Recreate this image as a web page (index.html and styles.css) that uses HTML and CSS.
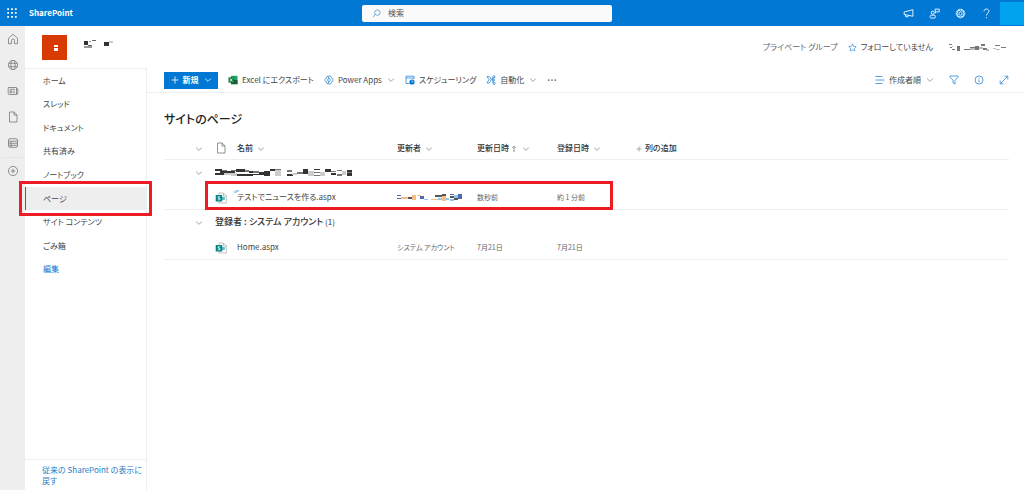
FILE: index.html
```html
<!DOCTYPE html>
<html lang="ja">
<head>
<meta charset="utf-8">
<title>サイトのページ - SharePoint</title>
<link rel="stylesheet" href="styles.css">
</head>
<body>
<svg class="defs" aria-hidden="true">
  <symbol id="chev" viewBox="0 0 8 8"><path d="M1.2 2.6 4 5.4 6.8 2.6"/></symbol>
  <symbol id="doc" viewBox="0 0 12 12"><path d="M2.5 1h4.6L10 3.9V11H2.500zM7 1v3h3"/></symbol>
  <symbol id="page" viewBox="0 0 12 12"><path d="M4 1h4.500L11.300 3.800V11H4z" fill="#fff" stroke="#aaa" stroke-width=".7"/><path d="M8.500 1v3h2.800" fill="none" stroke="#aaa" stroke-width=".7"/><path d="M7 5h2.800v3H7z" fill="#53c5c9" stroke="none"/><path d="M.7 3h6.500v6.500H.7z" fill="#038387" stroke="none"/><path d="M5.200 4.700H3.200v1.500h1.700v1.600H2.800" fill="none" stroke="#fff" stroke-width=".8"/></symbol>
</svg>
<header class="suite">
  <button class="waffle" aria-label="アプリ起動ツール"><svg viewBox="0 0 10 10"><path fill="#fff" stroke="none" d="M1 1h1.500v1.500H1zM4.200 1h1.500v1.500H4.200zM7.400 1h1.500v1.500H7.400zM1 4.200h1.500v1.500H1zM4.200 4.200h1.500v1.500H4.200zM7.400 4.200h1.500v1.500H7.400zM1 7.400h1.500v1.500H1zM4.200 7.400h1.500v1.500H4.200zM7.400 7.400h1.500v1.500H7.400z"/></svg></button>
  <a class="brand" href="#">SharePoint</a>
  <label class="search"><svg viewBox="0 0 10 10"><circle cx="6" cy="4" r="3"/><path d="M3.800 6.200 1 9"/></svg><input type="search" placeholder="検索" aria-label="検索"></label>
  <div class="suite-actions">
    <button aria-label="お知らせ"><svg viewBox="0 0 10 10"><path d="M9 1.500v6L1 5.800V3.700zM2.300 6.200v1.500l2.200.5.300-1.500"/></svg></button>
    <button aria-label="共有"><svg viewBox="0 0 10 10"><circle cx="3.400" cy="4.300" r="1.400"/><rect x="1" y="6.500" width="4.800" height="2.700" rx="1.200"/><path d="M5.600 1h3.700v2.500H7L5.800 4.600z"/></svg></button>
    <button aria-label="設定"><svg viewBox="0 0 10 10"><circle cx="5" cy="5" r="3.900" stroke-dasharray="2 .6"/><circle cx="5" cy="5" r="3.200"/><circle cx="5" cy="5" r="1.500"/></svg></button>
    <button aria-label="ヘルプ"><svg viewBox="0 0 10 10"><path d="M2.800 3C2.800 1.500 3.700 1 5 1s2.200.8 2.200 2S5 5 5 6.800M5 8.200v1"/></svg></button>
    <button class="me" aria-label="アカウント"></button>
  </div>
</header>
<div class="shell">
  <nav class="rail" aria-label="グローバル">
    <a href="#" aria-label="ホーム"><svg viewBox="0 0 12 12"><path d="M1.500 5.200 6 1.300l4.500 3.900v5.500H7.500V7.500a1.500 1.500 0 0 0-3 0v3.200h-3z"/></svg></a>
    <a href="#" aria-label="サイト"><svg viewBox="0 0 12 12"><circle cx="6" cy="6" r="4.600"/><ellipse cx="6" cy="6" rx="2.100" ry="4.600"/><path d="M1.800 4.300h8.400M1.800 7.700h8.400"/></svg></a>
    <a href="#" aria-label="ニュース"><svg viewBox="0 0 12 12"><path d="M1.200 2.500h8.300v7H2.400q-1.200 0-1.200-1.200zM9.500 3.800h1.300v4.500q0 1.200-1.300 1.200M2.800 4.300h5M3 5.900h1.900v1.900H3zM6.200 6h1.700M6.200 7.700h1.700"/></svg></a>
    <a href="#" aria-label="ファイル"><svg><use href="#doc"/></svg></a>
    <a href="#" aria-label="リスト"><svg viewBox="0 0 12 12"><rect x="1.500" y="1.700" width="9" height="8.600" rx="1.400"/><path d="M1.500 4.200h9M1.500 6.300h9M1.500 8.300h9M4 4.200v6"/></svg></a>
    <a class="create" href="#" aria-label="作成"><svg viewBox="0 0 12 12"><circle cx="6" cy="6" r="4.600"/><path d="M6 3.700v4.600M3.700 6h4.600"/></svg></a>
  </nav>
  <div class="site">
    <div class="site-head">
      <div class="logo"><svg viewBox="0 0 25 25"><path fill="#fff" d="M12 10h4v2h-4zM12 13h4v3h-4z"/></svg></div>
      <svg class="mosaic site-name" viewBox="0 0 32 10"><path fill="#333" d="M1 1h4v4H1zM21 2h5v4h-5z"/><path fill="#666" d="M9 0h4v1H9zM5 5h4v1H5z"/><path fill="#999" d="M1 6h8v2H1zM6 1h2v1H6z"/><path fill="#ccc" d="M26 1h4v2h-4z"/></svg>
      <div class="site-meta">
        <span>プライベート グループ</span>
        <button class="follow"><svg viewBox="0 0 10 10"><path d="m5 1 1.200 2.700 2.900.3L7 6l.6 2.900L5 7.400 2.400 8.900 3 6 .9 4l2.900-.3z"/></svg>フォローしていません</button>
        <svg class="mosaic members" viewBox="0 0 58 9"><path fill="#777" d="M1 1h3v1H1zM2 4h2v1H2zM4 6h3v1H4zM9 3h3v5H9zM16 6h6v1h-6zM22 4h5v1h-5zM27 3h4v4h-4zM33 1h4v2h-4zM35 5h4v2h-4zM47 2h5v1h-5zM53 4h5v1h-5z"/><path fill="#bbb" d="M4 3h1v1H4zM22 5h5v2h-5zM31 4h4v2h-4zM38 6h3v2h-3zM45 5h3v1h-3zM48 6h4v1h-4z"/></svg>
      </div>
    </div>
    <div class="body">
      <aside class="side">
        <nav aria-label="サイト">
          <ul>
            <li><a href="#">ホーム</a></li>
            <li><a href="#">スレッド</a></li>
            <li><a href="#">ドキュメント</a></li>
            <li><a href="#">共有済み</a></li>
            <li><a href="#">ノートブック</a></li>
            <li class="current"><a href="#" aria-current="page">ページ</a><span class="marker"></span></li>
            <li><a href="#">サイト コンテンツ</a></li>
            <li><a href="#">ごみ箱</a></li>
            <li class="edit"><a href="#">編集</a></li>
          </ul>
        </nav>
        <a class="classic" href="#">従来の SharePoint の表示に戻す</a>
      </aside>
      <main>
        <div class="commands">
          <button class="new"><svg viewBox="0 0 8 8"><path d="M4 .5v7M.5 4h7"/></svg>新規<svg class="chev"><use href="#chev"/></svg></button>
          <button><svg viewBox="0 0 10 10" class="ic"><path fill="#21a366" stroke="none" d="M3 .8h6.500v8.400H3z"/><path fill="#185c37" stroke="none" d="M3 5h6.500v4.200H3z"/><path fill="#107c41" stroke="none" d="M.5 2.300h5.400v5.400H.5z"/><path stroke="#fff" d="m2 3.500 2.400 3M4.400 3.500 2 6.500"/></svg>Excel にエクスポート</button>
          <button><svg viewBox="0 0 10 10" class="ic"><path d="M3.500 1.200h3L9.300 5 6.500 8.800h-3L.7 5zM3.500 1.200 6.500 5l-3 3.800M5 3 3.500 5 5 7"/></svg>Power Apps<svg class="chev"><use href="#chev"/></svg></button>
          <button><svg viewBox="0 0 10 10" class="ic"><path d="M4.500 8.500H1V1.200h8v3M1 3h8"/><circle cx="7" cy="7" r="2.600" fill="#0078d4" stroke="none"/><path stroke="#fff" stroke-width=".6" d="M7 5.600V7h1.200"/></svg>スケジューリング</button>
          <button><svg viewBox="0 0 10 10" class="ic"><path d="M1 1.500h1.800Q5 2 5 4.500T2.800 8H1l2-3.500zM5 4.500 7 2.600M7 2.600V8"/><circle cx="8" cy="1.900" r="1.100"/><circle cx="7.500" cy="5" r="1"/><circle cx="8" cy="8.300" r="1.100"/></svg>自動化<svg class="chev"><use href="#chev"/></svg></button>
          <button class="more" aria-label="その他"><svg viewBox="0 0 10 10"><path fill="#444" stroke="none" d="M1 4.500h1.400v1.200H1zM4.300 4.500h1.400v1.200H4.300zM7.600 4.500H9v1.200H7.600z"/></svg></button>
          <div class="view">
            <button><svg viewBox="0 0 10 10" class="ic"><path d="M.5 1.500h7M.5 5h9M.5 8.500h7"/></svg>作成者順<svg class="chev"><use href="#chev"/></svg></button>
            <button aria-label="フィルター"><svg viewBox="0 0 10 10" class="ic"><path d="M1 1h8v1.200L6 5.200V9L4 7.800V5.200l-3-3z"/></svg></button>
            <button aria-label="詳細"><svg viewBox="0 0 10 10" class="ic"><circle cx="5" cy="5" r="4"/><path d="M5 4.500v2.700M5 2.700v.8"/></svg></button>
            <button aria-label="展開"><svg viewBox="0 0 10 10" class="ic"><path d="m1.300 8.700 7.400-7.400M5.500 1.200h3.300v3.300M1.200 5.500v3.300h3.300"/></svg></button>
          </div>
        </div>
        <section class="library">
          <h1>サイトのページ</h1>
          <table>
            <colgroup><col class="c-toggle"><col class="c-icon"><col class="c-name"><col class="c-meta"><col class="c-meta"><col class="c-meta"><col></colgroup>
            <thead>
              <tr>
                <th class="toggle"><svg class="chev"><use href="#chev"/></svg></th>
                <th><svg class="file"><use href="#doc"/></svg></th>
                <th>名前<svg class="chev"><use href="#chev"/></svg></th>
                <th>更新者<svg class="chev"><use href="#chev"/></svg></th>
                <th>更新日時<svg class="sort" viewBox="0 0 8 8"><path d="M4 7V1.200M2.300 2.900 4 1.200l1.700 1.700"/></svg><svg class="chev"><use href="#chev"/></svg></th>
                <th>登録日時<svg class="chev"><use href="#chev"/></svg></th>
                <th><svg class="add" viewBox="0 0 8 8"><path d="M4 1.500v5M1.500 4h5"/></svg>列の追加</th>
              </tr>
            </thead>
            <tbody>
              <tr class="group">
                <td class="toggle"><svg class="chev"><use href="#chev"/></svg></td>
                <td colspan="6"><svg class="mosaic group-name" viewBox="0 0 138 9"><path fill="#333" d="M0 1h7v2H0zM5 3h7v2H5zM0 5h9v2H0zM12 3h8v2h-8zM21 1h9v3h-9zM22 6h16v2H22zM34 3h4v2h-4zM38 6h8v1h-8zM49 3h6v5h-6zM55 1h5v2h-5zM44 4h5v3h-5zM72 6h6v2h-6zM88 1h5v5h-5zM99 1h6v1h-6zM110 1h6v3h-6zM116 5h5v2h-5zM132 2h5v2h-5zM132 5h5v3h-5z"/><path fill="#777" d="M7 2h5v1H7zM16 2h5v1h-5zM30 2h4v2h-4zM38 3h6v2h-6zM60 1h6v1h-6zM72 2h5v2h-5zM82 4h6v2h-6zM99 4h6v1h-6zM99 7h6v1h-6zM116 3h5v1h-5zM122 2h5v1h-5zM122 6h5v2h-5zM132 4h5v1h-5z"/><path fill="#ccc" d="M9 5h7v2H9zM16 5h6v3h-6zM60 2h6v6h-6zM77 5h5v2h-5zM93 3h6v5h-6zM105 4h5v4h-5zM127 3h4v4h-4z"/></svg></td>
              </tr>
              <tr class="item">
                <td></td>
                <td><svg class="file"><use href="#page"/></svg></td>
                <td><a href="#">テストでニュースを作る.aspx</a><svg class="glimmer" viewBox="0 0 6 6"><path d="M1 2.500 2.500 4M3 1v2.500M5.500 1 4.500 3"/></svg></td>
                <td><svg class="mosaic editor" viewBox="0 0 66 9"><path fill="#5068b0" d="M0 2h4v1H0zM0 5h4v1H0zM23 3h4v3h-4zM53 1h4v1h-4zM61 1h4v5h-4z"/><path fill="#f6bd87" d="M4 4h7v2H4zM15 2h4v5h-4zM34 6h7v1h-7zM45 3h4v5h-4zM20 2h4v1h-4z"/><path fill="#555" d="M11 4h4v2h-4zM38 2h7v2h-7zM45 1h4v2h-4zM53 3h4v2h-4zM57 5h4v2h-4z"/><path fill="#8cc5ee" d="M27 6h4v1h-4zM41 5h4v2h-4zM49 5h3v2h-3zM57 2h4v3h-4zM53 6h4v2h-4z"/></svg></td>
                <td>数秒前</td>
                <td>約 1 分前</td>
                <td><span class="marker"></span></td>
              </tr>
              <tr class="group">
                <td class="toggle"><svg class="chev"><use href="#chev"/></svg></td>
                <td colspan="6"><b>登録者 : システム アカウント</b> (1)</td>
              </tr>
              <tr class="item">
                <td></td>
                <td><svg class="file"><use href="#page"/></svg></td>
                <td><a href="#">Home.aspx</a></td>
                <td>システム アカウント</td>
                <td>7月21日</td>
                <td>7月21日</td>
                <td></td>
              </tr>
            </tbody>
          </table>
        </section>
      </main>
    </div>
  </div>
</div>
</body>
</html>
```

FILE: styles.css
```css
* { box-sizing: border-box; }
body {
  margin: 0;
  min-height: 100vh;
  display: flex;
  flex-direction: column;
  background: #fff;
  color: #444;
  font: 8px/12px "Noto Sans CJK JP", sans-serif;
  font-feature-settings: "palt";
}
a { color: inherit; text-decoration: none; }
button {
  display: inline-flex;
  align-items: center;
  padding: 0;
  border: 0;
  background: none;
  color: inherit;
  font: inherit;
  font-feature-settings: inherit;
  white-space: nowrap;
}
svg { flex: none; fill: none; stroke: currentColor; stroke-width: 0.8; }
.defs { position: absolute; width: 0; height: 0; }
.mosaic { stroke: none; display: block; }
.chev { width: 8px; height: 8px; color: #888; }

.suite {
  height: 26px;
  display: grid;
  grid-template-columns: 19fr 250px 22fr;
  grid-template-areas: "brand search actions";
  align-items: center;
  background: #0078d4;
  color: #fff;
  padding-left: 6px;
}
.waffle, .brand { grid-area: brand; }
.waffle { justify-self: start; }
.waffle svg { width: 12px; height: 12px; }
.brand { justify-self: start; margin-left: 23px; font-weight: 700; }
.search {
  grid-area: search;
  display: flex;
  align-items: center;
  gap: 7px;
  height: 17px;
  padding: 0 10px;
  border-radius: 2px;
  background: #fafafa;
  color: #3a8fd8;
}
.search svg { width: 9px; height: 9px; }
.search input {
  flex: 1;
  min-width: 0;
  padding: 0;
  border: 0;
  outline: 0;
  background: none;
  font: inherit;
}
.search input::placeholder { color: #555; opacity: 1; }
.suite-actions {
  grid-area: actions;
  justify-self: end;
  display: flex;
  align-items: center;
  gap: 15px;
}
.suite-actions svg { width: 11px; height: 11px; }
.suite-actions .me { width: 24px; height: 23px; margin-left: -7px; background: #00a2ed; }

.shell { flex: 1; display: flex; }
.rail {
  width: 25px;
  flex: none;
  display: flex;
  flex-direction: column;
  align-items: center;
  background: #eee;
  color: #777;
}
.rail a { width: 21px; height: 26px; display: grid; place-items: center; }
.rail svg { width: 12px; height: 12px; }
.rail .create { margin-top: 1px; border-top: 1px solid #e4e4e4; }

.site { flex: 1; min-width: 0; display: flex; flex-direction: column; }
.site-head { height: 42px; display: flex; align-items: center; padding: 0 18px 0 17px; }
.logo { width: 25px; height: 25px; background: #d83b01; }
.logo svg { display: block; stroke: none; }
.site-name { width: 32px; height: 10px; margin-left: 16px; margin-bottom: 4px; }
.site-meta { margin-left: auto; display: flex; align-items: center; color: #666; }
.follow { gap: 4px; margin-left: 10px; color: #444; }
.follow svg { width: 9px; height: 9px; color: #3a8fd8; }
.members { width: 58px; height: 9px; margin-left: 15px; }

.body { flex: 1; display: flex; }
.side {
  width: 122px;
  flex: none;
  display: flex;
  flex-direction: column;
  justify-content: space-between;
  border-top: 1px solid #eee;
  border-right: 1px solid #eee;
}
.side ul {
  height: 212px;
  margin: 0;
  padding: 0;
  list-style: none;
  display: flex;
  flex-direction: column;
}
.side li { position: relative; flex: 1; display: flex; align-items: center; padding-left: 18px; }
.current { background: #eee; }
.current::before { content: ""; position: absolute; left: 0; top: 0; bottom: 0; width: 1px; background: #0078d4; }
.marker { position: absolute; border: 3px solid #ed1c24; pointer-events: none; }
.side .marker { left: -6px; right: -6px; top: -6px; bottom: -6px; }
.edit { color: #0078d4; }
.classic { padding: 4px 2px 4px 17px; border-top: 1px solid #eee; color: #2b7cc4; line-height: 11px; }

main { flex: 1; min-width: 0; }
.commands {
  height: 25px;
  display: flex;
  align-items: center;
  gap: 10px;
  padding: 0 15px 0 17px;
  border-bottom: 1px solid #eee;
}
.commands button { gap: 4px; }
.commands .ic { width: 10px; height: 10px; color: #2b88d8; }
.commands .chev { margin-left: 1px; }
.commands .new {
  width: 54px;
  height: 17px;
  justify-content: center;
  background: #0078d4;
  color: #fff;
  font-weight: 700;
}
.new svg { width: 8px; height: 8px; }
.commands .new .chev { color: #fff; }
.more svg { width: 10px; height: 10px; }
.view { margin-left: auto; display: flex; align-items: center; gap: 15px; }

.library { padding: 17px 15px 0 17px; }
h1 { margin: 0 0 9px; font-size: 12px; line-height: 18px; font-weight: 500; color: #222; }
table { width: 100%; table-layout: fixed; border-collapse: collapse; }
.c-toggle { width: 51px; }
.c-icon { width: 22px; }
.c-name { width: 160px; }
.c-meta { width: 80px; }
th, td { padding: 0; text-align: left; vertical-align: middle; white-space: nowrap; font-weight: 400; }
th { height: 22px; color: #333; font-weight: 500; }
td { height: 25px; padding-top: 2px; }
.group td { padding-top: 1px; }
thead tr, .item { border-bottom: 1px solid #eee; }
th svg, td svg { vertical-align: middle; }
th .chev { margin-left: 4px; }
.toggle .chev { margin-left: 31px; }
.file { width: 12px; height: 12px; color: #777; }
.sort { width: 8px; height: 8px; margin-left: 1px; color: #777; }
.add { width: 8px; height: 8px; margin: 0 2px 0 -2px; color: #999; }
.group td { color: #333; }
.group b { font-size: 9px; font-weight: 500; }
.group-name { width: 138px; height: 9px; }
.item { position: relative; }
.item td { font-size: 7px; color: #666; }
.item td a { font-size: 8px; color: #444; }
.item .marker { left: 41px; width: 408px; top: -3px; bottom: -2px; }
.glimmer { position: absolute; left: 69px; top: 5px; width: 6px; height: 6px; color: #2b88d8; }
.editor { width: 66px; height: 9px; }
```
